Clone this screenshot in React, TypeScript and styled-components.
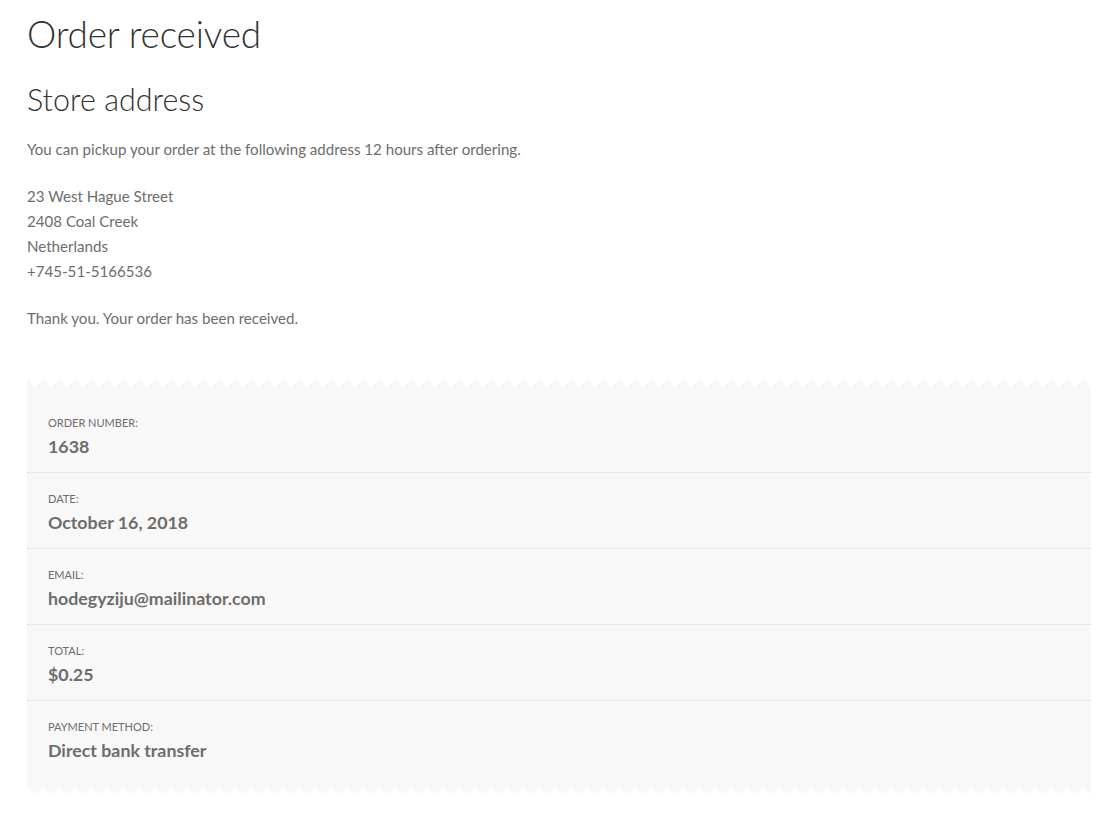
import styled, { createGlobalStyle } from 'styled-components';

const GlobalStyle = createGlobalStyle`
  body {
    margin: 0;
    background: #ffffff;
    font-family: Lato, "Open Sans", sans-serif;
    color: #6d6d6d;
    -webkit-font-smoothing: antialiased;
  }
`;

interface Detail {
  label: string;
  value: string;
}

const details: Detail[] = [
  { label: 'Order number:', value: '1638' },
  { label: 'Date:', value: 'October 16, 2018' },
  { label: 'Email:', value: 'hodegyziju@mailinator.com' },
  { label: 'Total:', value: '$0.25' },
  { label: 'Payment method:', value: 'Direct bank transfer' },
];

const App = () => {
  return (
    <>
      <GlobalStyle />
      <Page>
        <Title>Order received</Title>
        <SubTitle>Store address</SubTitle>
        <Text>You can pickup your order at the following address 12 hours after ordering.</Text>
        <Text>
          23 West Hague Street
          <br />
          2408 Coal Creek
          <br />
          Netherlands
          <br />
          +745-51-5166536
        </Text>
        <Text>Thank you. Your order has been received.</Text>

        <DetailsBox>
          {details.map((d) => (
            <DetailRow key={d.label}>
              <Label>{d.label}</Label>
              <Value>{d.value}</Value>
            </DetailRow>
          ))}
        </DetailsBox>
      </Page>
    </>
  );
};

const Page = styled.main`
  padding: 12px 14px 22px 27px;
`;

const Title = styled.h1`
  margin: 0 0 26px;

  font-size: 37px;
  font-weight: 300;
  line-height: 43px;
  color: #333333;
  letter-spacing: -0.2px;
`;

const SubTitle = styled.h2`
  margin: 0 0 20px;

  font-size: 30.5px;
  font-weight: 300;
  line-height: 36px;
  color: #333333;
`;

const Text = styled.p`
  margin: 0 0 22px;

  font-size: 15.1px;
  line-height: 25px;
`;

const DetailsBox = styled.ul`
  position: relative;

  margin: 56px 0 8px;
  padding: 10px 0;

  list-style: none;
  background-color: #f8f8f8;

  /* zig-zag paper edges */
  &::before,
  &::after {
    content: '';
    position: absolute;
    left: 0;
    right: 0;
    height: 8px;
    background-repeat: repeat-x;
    background-size: 16px 8px;
  }

  &::before {
    top: -8px;
    background-image: conic-gradient(from 135deg at 50% 0, #f8f8f8 90deg, transparent 0);
    background-position: -8px 0;
  }

  &::after {
    bottom: -8px;
    background-image: conic-gradient(from -45deg at 50% 100%, #f8f8f8 90deg, transparent 0);
    background-position: 0 0;
  }
`;

const DetailRow = styled.li`
  padding: 18px 21px 14px;

  border-bottom: 1px dotted #d6d6d6;

  &:last-child {
    border-bottom: none;
  }
`;

const Label = styled.div`
  font-size: 11px;
  line-height: 16px;
  text-transform: uppercase;
`;

const Value = styled.strong`
  display: block;

  margin-top: 3px;

  font-size: 17.8px;
  font-weight: 700;
  line-height: 24px;
`;

export default App;
